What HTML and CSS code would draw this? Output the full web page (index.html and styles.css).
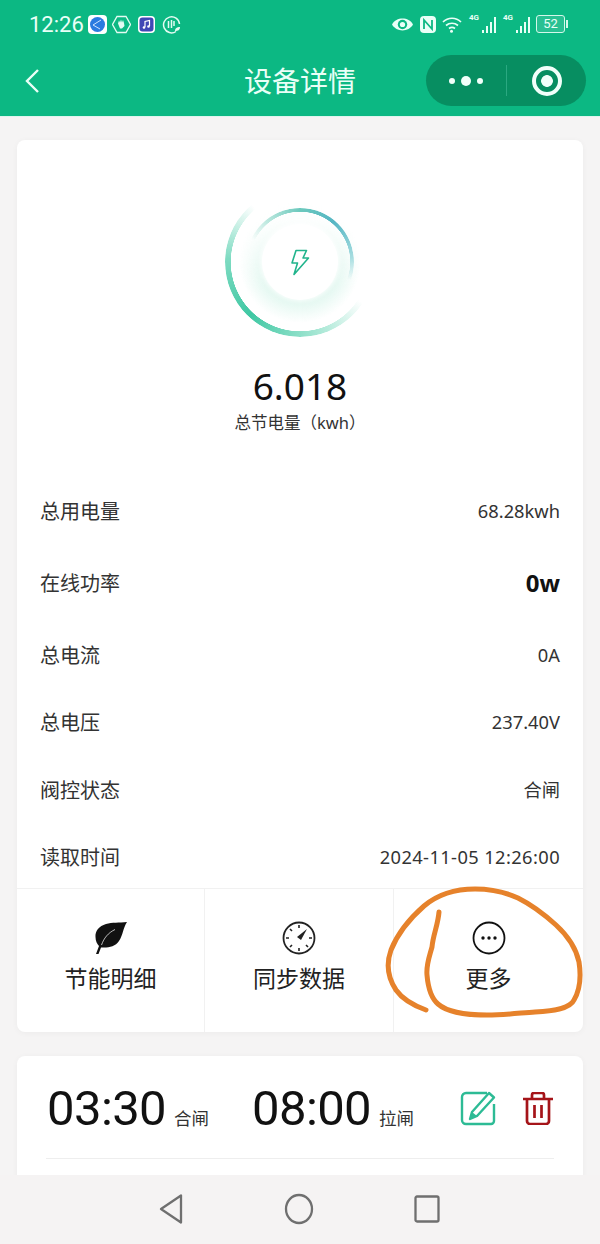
FILE: index.html
```html
<!DOCTYPE html>
<html lang="zh-CN">
<head>
  <meta charset="UTF-8">
  <title>设备详情</title>
  <link rel="stylesheet" href="styles.css">
</head>
<body>
  <div class="phone">
    <header class="top">
      <div class="status-bar">
        <span class="clock">12:26</span>
        <div class="app-icons">
          <svg class="ic-app" viewBox="0 0 19 19"><rect width="19" height="19" rx="4" fill="#fff"/><circle cx="9.5" cy="9.5" r="7.5" fill="#2a7be0"/><path d="M5 10l8-5M5 10l7 4" stroke="#cfe4ff" stroke-width="1" fill="none"/></svg>
          <svg class="ic-app" viewBox="0 0 19 19"><path d="M5 1.500h9l4.500 8-4.500 8H5l-4.500-8z" fill="none" stroke="#e4fbf2" stroke-width="1.300"/><path d="M6 8.500l1-3 1 2 1-3 1 3 1-2.500 1 3 .5 3-2.500 2.500H8z" fill="#e4fbf2"/></svg>
          <svg class="ic-app ic-small" viewBox="0 0 17 17"><rect width="17" height="17" rx="4" fill="#fff"/><rect x="1.500" y="1.500" width="14" height="14" rx="3" fill="#3f47b5"/><path d="M7 11V5.500l4.500-1V10" stroke="#fff" stroke-width="1.200" fill="none"/><circle cx="6" cy="11.500" r="1.300" fill="#fff"/><circle cx="10.500" cy="10.500" r="1.300" fill="#fff"/></svg>
          <svg class="ic-app" viewBox="0 0 19 19"><path d="M14 16.500A8 8 0 1 1 17.500 9" fill="none" stroke="#e4fbf2" stroke-width="1.500"/><path d="M6.500 6v7M9.500 5v8M12 6v5" stroke="#e4fbf2" stroke-width="1.500"/><path d="M13 16c0-3 2-4 5-4 0 3-2 4-5 4z" fill="#e4fbf2"/></svg>
        </div>
        <div class="sys-icons">
          <svg class="ic-eye" viewBox="0 0 22 14"><path d="M1 7c4-7.500 16-7.500 20 0-4 7.500-16 7.500-20 0z" fill="#e9fff7"/><circle cx="11" cy="7" r="4.500" fill="#0cb883"/><circle cx="11" cy="7" r="2.500" fill="#e9fff7"/></svg>
          <svg class="ic-nfc" viewBox="0 0 16 17"><rect width="16" height="17" rx="4" fill="#e9fff7"/><path d="M4 13V4l8 9V4" stroke="#0cb883" stroke-width="1.800" fill="none"/></svg>
          <svg class="ic-wifi" viewBox="0 0 20 17"><path d="M1 6c5-5 13-5 18 0M4 9.500c3.500-3 8.500-3 12 0M7 12.500c2-1.500 4-1.500 6 0" fill="none" stroke="#e9fff7" stroke-width="1.700"/><circle cx="9.500" cy="15.200" r="1.500" fill="#e9fff7"/></svg>
          <div class="signal"><span class="net">4G</span><i class="b1"></i><i class="b2"></i><i class="b3"></i><i class="b4"></i></div>
          <div class="signal"><span class="net">4G</span><i class="b1"></i><i class="b2"></i><i class="b3"></i><i class="b4"></i></div>
          <div class="battery"><span class="battery-box">52</span><i class="battery-tip"></i></div>
        </div>
      </div>
      <div class="title-bar">
        <svg class="back" viewBox="0 0 16 26"><path d="M14 2L3 13l11 11" fill="none" stroke="#eafff7" stroke-width="2.400"/></svg>
        <h1>设备详情</h1>
        <div class="capsule">
          <div class="capsule-dots"><i class="dot"></i><i class="dot dot-big"></i><i class="dot"></i></div>
          <div class="capsule-line"></div>
          <div class="capsule-target"><i></i></div>
        </div>
      </div>
    </header>

    <main class="content">
      <section class="card device-card">
        <div class="gauge">
          <div class="glow"></div>
          <div class="arc arc-outer"></div>
          <div class="arc arc-inner"></div>
          <div class="core">
            <svg class="bolt" viewBox="0 0 20 27"><path d="M6 1.500h10.500L13 9h5.500L4 25.500 7.500 14H2z" fill="none" stroke="#21b48c" stroke-width="1.600" stroke-linejoin="round"/></svg>
          </div>
        </div>
        <div class="total">6.018</div>
        <div class="total-label">总节电量（kwh）</div>

        <ul class="rows">
          <li class="row"><span>总用电量</span><span class="val">68.28kwh</span></li>
          <li class="row"><span>在线功率</span><strong>0w</strong></li>
          <li class="row"><span>总电流</span><span class="val">0A</span></li>
          <li class="row"><span>总电压</span><span class="val">237.40V</span></li>
          <li class="row"><span>阀控状态</span><span class="val">合闸</span></li>
          <li class="row"><span>读取时间</span><span class="val val-time">2024-11-05 12:26:00</span></li>
        </ul>

        <div class="actions">
          <div class="action action-1">
            <svg class="act-icon" viewBox="0 0 34 34"><path d="M33 1C25 2 18 1 12 3 5 5 1 10 1.500 16c0 4 1.500 7 3.500 9L2 33h2.500L7 26.500c7 .5 14-.5 18-6.500C29 14 29 7 33 1z" fill="#111"/><path d="M7.500 24C10 17 14 12 21 8.500" fill="none" stroke="#fff" stroke-width=".7"/></svg>
            <span>节能明细</span>
          </div>
          <div class="action action-2">
            <svg class="act-icon" viewBox="0 0 34 34"><circle cx="17" cy="17" r="15.500" fill="none" stroke="#222" stroke-width="1.800"/><path d="M17 4v3M17 27v3M4 17h3M27 17h3M8 8l2 2M8 26l2-2M26 26l-2-2" stroke="#222" stroke-width="1.600"/><path d="M25 8l-6 11-4-3z" fill="#222"/></svg>
            <span>同步数据</span>
          </div>
          <div class="action action-3">
            <svg class="act-icon" viewBox="0 0 34 34"><circle cx="17" cy="17" r="15.500" fill="none" stroke="#111" stroke-width="1.800"/><circle cx="11" cy="17" r="1.700" fill="#111"/><circle cx="17" cy="17" r="1.700" fill="#111"/><circle cx="23" cy="17" r="1.700" fill="#111"/></svg>
            <span>更多</span>
          </div>
        </div>
      </section>

      <section class="card timer-card">
        <div class="timer">
          <div class="time-pair"><span class="time">03:30</span><span class="time-tag">合闸</span></div>
          <div class="time-pair"><span class="time">08:00</span><span class="time-tag">拉闸</span></div>
          <div class="timer-tools">
            <svg class="ic-edit" viewBox="0 0 36 36"><path d="M27 3H6a4 4 0 0 0-4 4v23a4 4 0 0 0 4 4h25a3 3 0 0 0 3-3V14" fill="none" stroke="#2dbb95" stroke-width="2.400"/><path d="M29 3l5 4.500L17 26l-7 3 2-7z" fill="none" stroke="#2dbb95" stroke-width="2.400" stroke-linejoin="round"/><path d="M12 22l5 4-7 3z" fill="#2dbb95"/></svg>
            <svg class="ic-trash" viewBox="0 0 32 33"><path d="M1 7h30M10 7V3a2 2 0 0 1 2-2h8a2 2 0 0 1 2 2v4M5 7v22a3 3 0 0 0 3 3h16a3 3 0 0 0 3-3V7M12.500 13v13M19.500 13v13" fill="none" stroke="#a51419" stroke-width="2.700"/></svg>
          </div>
        </div>
        <div class="timer-line"></div>
      </section>
    </main>

    <nav class="nav-bar">
      <svg class="nav-back" viewBox="0 0 26 32"><path d="M23 2.500v27L3 16z" fill="none" stroke="#6f6f6f" stroke-width="2.300" stroke-linejoin="round"/></svg>
      <svg class="nav-home" viewBox="0 0 30 32"><ellipse cx="15" cy="16" rx="13" ry="14" fill="none" stroke="#6f6f6f" stroke-width="2.300"/></svg>
      <svg class="nav-recent" viewBox="0 0 26 28"><rect x="1.500" y="1.500" width="23" height="25" rx="1.500" fill="none" stroke="#6f6f6f" stroke-width="2.300"/></svg>
    </nav>

    <!-- hand drawn circle around 更多 -->
    <svg class="scribble" viewBox="0 0 600 1244">
      <path d="M439 912C438 925 433 935 432 947 429 958 426 965 427 975 428 987 431 998 438 1004 447 1012 465 1015 487 1015 505 1015 520 1013 535 1012 552 1011 570 1009 574 1000 581 988 581 975 579 962 576 948 568 936 556 925 545 915 532 905 518 898 505 892 490 889 475 889 455 889 437 895 424 906 408 920 397 935 391 950 386 964 388 978 396 990 403 1000 415 1006 426 1010" fill="none" stroke="#e6822b" stroke-width="5" stroke-linecap="round" stroke-linejoin="round"/>
    </svg>
  </div>
</body>
</html>
```

FILE: styles.css
```css
* { box-sizing: border-box; }
html, body { margin: 0; padding: 0; }
body {
  background: #f5f4f4;
  font-family: "Noto Sans", "Noto Sans CJK SC", sans-serif;
  color: #222;
}
.phone {
  position: relative;
  width: 600px;
  height: 1244px;
  display: flex;
  flex-direction: column;
  overflow: hidden;
}

/* header */
.top {
  height: 116px;
  flex: none;
  background: #0cb883;
  color: #e9fff7;
}
.status-bar {
  height: 46px;
  display: flex;
  align-items: center;
  padding: 2px 32px 0 29px;
}
.clock {
  font-family: Roboto, sans-serif;
  font-size: 22px;
  width: 59px;
}
.app-icons { display: flex; align-items: center; gap: 5px; }
.ic-app { width: 19px; height: 19px; }
.ic-small { width: 17px; height: 17px; margin: 0 2px; }
.sys-icons {
  margin-left: auto;
  display: flex;
  align-items: center;
  gap: 6px;
}
.ic-eye { width: 23px; height: 15px; }
.ic-nfc { width: 16px; height: 17px; }
.ic-wifi { width: 20px; height: 17px; }
.signal {
  position: relative;
  width: 28px;
  height: 17px;
  display: flex;
  align-items: flex-end;
  justify-content: flex-end;
  gap: 2px;
}
.signal i { display: block; width: 2px; background: #e9fff7; }
.signal .b1 { height: 3px; }
.signal .b2 { height: 7px; }
.signal .b3 { height: 11px; }
.signal .b4 { height: 16px; }
.net {
  position: absolute;
  left: 1px;
  top: -3px;
  font-family: Roboto, sans-serif;
  font-size: 8px;
  font-weight: 700;
}
.battery { display: flex; align-items: center; gap: 1px; }
.battery-box {
  width: 29px;
  height: 18px;
  border: 1.5px solid #d5f7ea;
  border-radius: 3px;
  font-family: Roboto, sans-serif;
  font-size: 13px;
  line-height: 15px;
  text-align: center;
  background: rgba(255, 255, 255, 0.12);
}
.battery-tip { display: block; width: 2px; height: 8px; background: #d5f7ea; }

.title-bar {
  position: relative;
  height: 70px;
  display: flex;
  align-items: center;
  justify-content: center;
}
.back { position: absolute; left: 24px; top: 22px; width: 16px; height: 26px; }
.title-bar h1 {
  margin: 0;
  font-size: 28px;
  font-weight: 400;
  line-height: 70px;
}
.capsule {
  position: absolute;
  left: 426px;
  top: 9px;
  width: 160px;
  height: 51px;
  border-radius: 26px;
  background: #078e61;
  display: flex;
  align-items: center;
}
.capsule-dots {
  width: 80px;
  display: flex;
  align-items: center;
  justify-content: center;
  gap: 6px;
}
.dot { display: block; width: 6px; height: 6px; border-radius: 50%; background: #f1fffa; }
.dot-big { width: 10px; height: 10px; }
.capsule-line { width: 1px; height: 31px; background: #2ba881; }
.capsule-target { flex: 1; display: flex; justify-content: center; }
.capsule-target i {
  display: block;
  width: 30px;
  height: 30px;
  border: 4px solid #f1fffa;
  border-radius: 50%;
  background: radial-gradient(circle, #f1fffa 0, #f1fffa 5.5px, transparent 6.2px);
}

/* content */
.content {
  flex: 1;
  min-height: 0;
  overflow: hidden;
  padding: 24px 17px 0;
  display: flex;
  flex-direction: column;
  gap: 24px;
  box-shadow: inset 0 1px 0 #dff5ee;
}
.card {
  flex: none;
  background: #fff;
  border-radius: 8px;
  box-shadow: 0 1px 6px rgba(0, 0, 0, 0.04);
}
.device-card { height: 892px; display: flex; flex-direction: column; overflow: hidden; }

.gauge {
  position: relative;
  width: 150px;
  height: 150px;
  margin: 47px auto 0 208px;
  flex: none;
}
.arc { position: absolute; border-radius: 50%; }
.arc-outer {
  inset: 0;
  background: conic-gradient(from 123deg, transparent 0, #b5ebdb 35deg, #3fc8a3 100deg, #7fdbc2 150deg, transparent 197deg, transparent 360deg);
  -webkit-mask: radial-gradient(circle closest-side, transparent calc(100% - 6px), #000 calc(100% - 5.5px));
  mask: radial-gradient(circle closest-side, transparent calc(100% - 6px), #000 calc(100% - 5.5px));
}
.arc-inner {
  inset: 21px;
  background: conic-gradient(from 295deg, transparent 0, #bfe9e0 25deg, #6cc9bd 65deg, #55b6c4 105deg, #a6dde0 150deg, transparent 175deg, transparent 360deg);
  -webkit-mask: radial-gradient(circle closest-side, transparent calc(100% - 4px), #000 calc(100% - 3.5px));
  mask: radial-gradient(circle closest-side, transparent calc(100% - 4px), #000 calc(100% - 3.5px));
}
.glow {
  position: absolute;
  inset: 14px;
  border-radius: 50%;
  background: radial-gradient(circle closest-side, #e0f7ef 62%, rgba(255, 255, 255, 0) 100%);
  -webkit-mask: linear-gradient(to bottom, rgba(0, 0, 0, 0.1) 15%, #000 70%);
  mask: linear-gradient(to bottom, rgba(0, 0, 0, 0.1) 15%, #000 70%);
}
.core {
  position: absolute;
  left: 37px;
  top: 37px;
  width: 76px;
  height: 76px;
  border-radius: 50%;
  background: #fff;
  box-shadow: 0 0 5px 1px #fff;
  display: flex;
  align-items: center;
  justify-content: center;
}
.bolt { width: 20px; height: 27px; }

.total {
  margin-top: 24px;
  text-align: center;
  font-size: 37px;
  line-height: 50px;
  color: #111;
}
.total-label {
  text-align: center;
  font-size: 16.5px;
  line-height: 24px;
  color: #333;
  margin-bottom: 39px;
}

.rows {
  list-style: none;
  margin: 0;
  padding: 0 23px;
  flex: 1;
}
.row {
  display: flex;
  align-items: center;
  justify-content: space-between;
  font-size: 20px;
  color: #333;
  height: 72px;
}
.row:nth-child(4) { height: 63px; }
.row:nth-child(6) { height: 63px; }
.row strong { font-size: 24px; color: #111; font-weight: 700; }
.val { font-size: 18.3px; color: #333; }
.val-time { letter-spacing: 0.4px; }

.actions {
  height: 144px;
  flex: none;
  display: flex;
  border-top: 1px solid #f1f1f1;
}
.action {
  display: flex;
  flex-direction: column;
  align-items: center;
  padding-top: 32px;
  gap: 5px;
  font-size: 23px;
  line-height: 36px;
  color: #222;
}
.action-1 { width: 188px; border-right: 1px solid #f1f1f1; }
.action-2 { width: 189px; border-right: 1px solid #f1f1f1; }
.action-3 { flex: 1; }
.act-icon { width: 34px; height: 34px; }

.timer-card { height: 140px; padding: 0 29px; }
.timer {
  height: 102px;
  padding-top: 2px;
  display: flex;
  align-items: center;
}
.time-pair { display: flex; align-items: baseline; width: 205px; padding-left: 1px; }
.time {
  font-family: Roboto, sans-serif;
  font-size: 49px;
  color: #111;
  letter-spacing: -0.6px;
}
.time-tag { font-size: 17.5px; color: #333; margin-left: 8px; }
.timer-tools { display: flex; align-items: center; gap: 26px; margin-left: 4px; }
.ic-edit { width: 36px; height: 36px; }
.ic-trash { width: 32px; height: 33px; }
.timer-line { height: 1px; background: #eee; }

.nav-bar {
  height: 69px;
  flex: none;
  background: #f5f3f3;
  display: flex;
  align-items: center;
  justify-content: center;
  gap: 100px;
  padding: 0 0 2px 1px;
}
.nav-back { width: 26px; height: 32px; margin-left: -3px; }
.nav-home { width: 30px; height: 32px; }
.nav-recent { width: 26px; height: 28px; }

.scribble {
  position: absolute;
  left: 0;
  top: 0;
  width: 600px;
  height: 1244px;
  pointer-events: none;
}
```
